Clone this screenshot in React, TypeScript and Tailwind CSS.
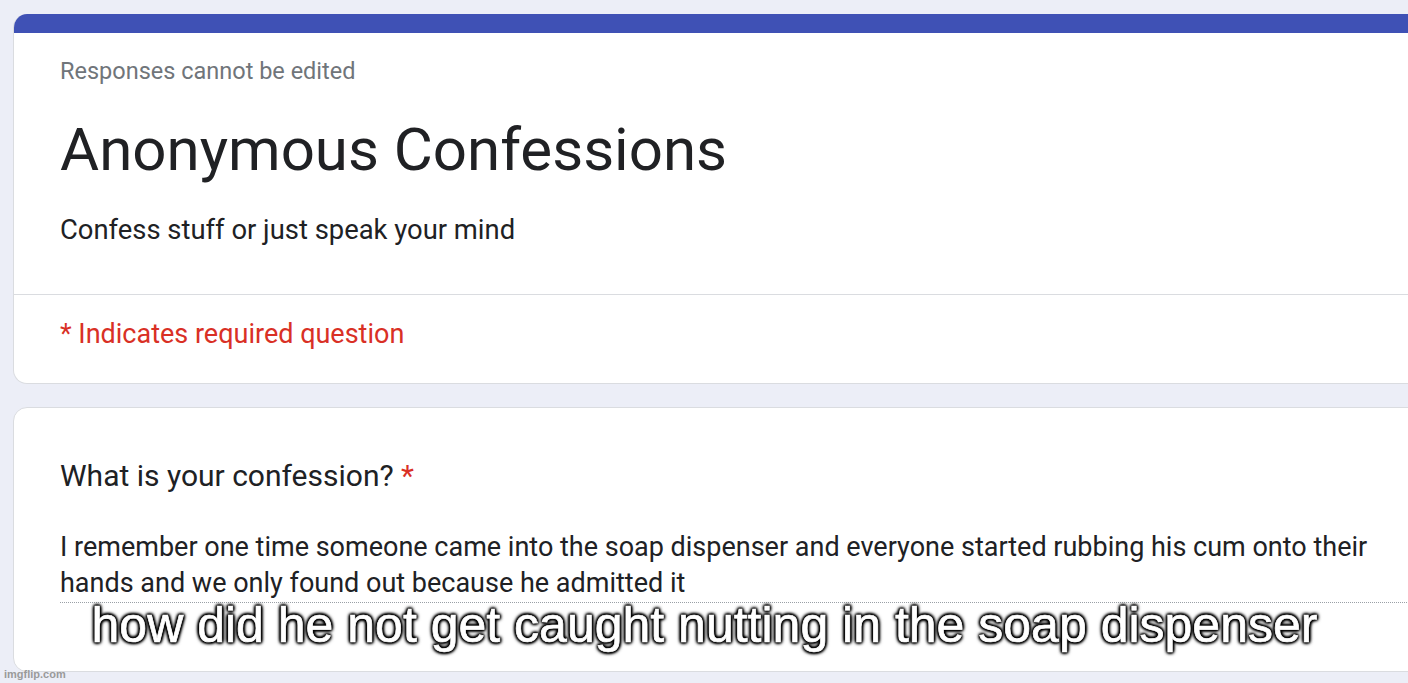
export default function App() {
  return (
    <div
      className="relative h-[683px] w-[1408px] overflow-hidden bg-[#eceef7]"
      style={{ fontFamily: "Roboto, 'Liberation Sans', sans-serif" }}
    >
      <div className="flex flex-col gap-[23px] pl-[13px] pt-[14px]">
        {/* header card */}
        <div className="w-[1420px] overflow-hidden rounded-[14px] border border-t-0 border-[#dadce0] bg-white">
          <div className="h-[19px] bg-[#3f51b5]" />
          <div className="px-[46px] pt-[24px]">
            <p className="text-[23.5px] leading-[28px] text-[#70757a]">Responses cannot be edited</p>
            <h1 className="mt-[29px] text-[60px] leading-[72px] text-[#202124]">Anonymous Confessions</h1>
            <p className="mt-[26px] text-[27.4px] leading-[36px] text-[#202124]">Confess stuff or just speak your mind</p>
          </div>
          <div className="mt-[46px] border-t border-[#dadce0]" />
          <div className="px-[46px] pb-[31px] pt-[21px]">
            <p className="text-[27px] leading-[36px] text-[#d93025]">* Indicates required question</p>
          </div>
        </div>

        {/* question card */}
        <div className="h-[265px] w-[1420px] rounded-[14px] border border-[#dadce0] bg-white px-[46px] pt-[48px]">
          <p className="text-[30px] leading-[40px] text-[#202124]">
            What is your confession? <span className="text-[#d93025]">*</span>
          </p>
          <div className="mt-[33px] w-[1349px] border-b border-dotted border-[#9aa0a6] pb-[1px]">
            <p className="text-[27px] leading-[36px] text-[#202124]">
              I remember one time someone came into the soap dispenser and everyone started rubbing his cum onto their
              hands and we only found out because he admitted it
            </p>
          </div>
        </div>
      </div>

      {/* meme caption */}
      <div
        className="absolute left-0 top-[595px] w-[1408px] pl-[1px] text-center text-[50px] leading-[60px] text-white"
        style={{
          fontFamily: "'Liberation Sans', Arial, sans-serif",
          WebkitTextStroke: "0.7px #fff",
          textShadow:
            "0 0 2px #000, 0 0 3px #000, 0 0 4px #000, 0 0 5px #000, 1px 1px 3px #000, -1px -1px 3px #000, 1px -1px 3px #000, -1px 1px 3px #000",
        }}
      >
        how did he not get caught nutting in the soap dispenser
      </div>

      <div
        className="absolute bottom-[3px] left-[4px] text-[11px] font-bold leading-[12px] text-[#9a9a9a]"
        style={{ fontFamily: "'Liberation Sans', Arial, sans-serif" }}
      >
        imgflip.com
      </div>
    </div>
  );
}
